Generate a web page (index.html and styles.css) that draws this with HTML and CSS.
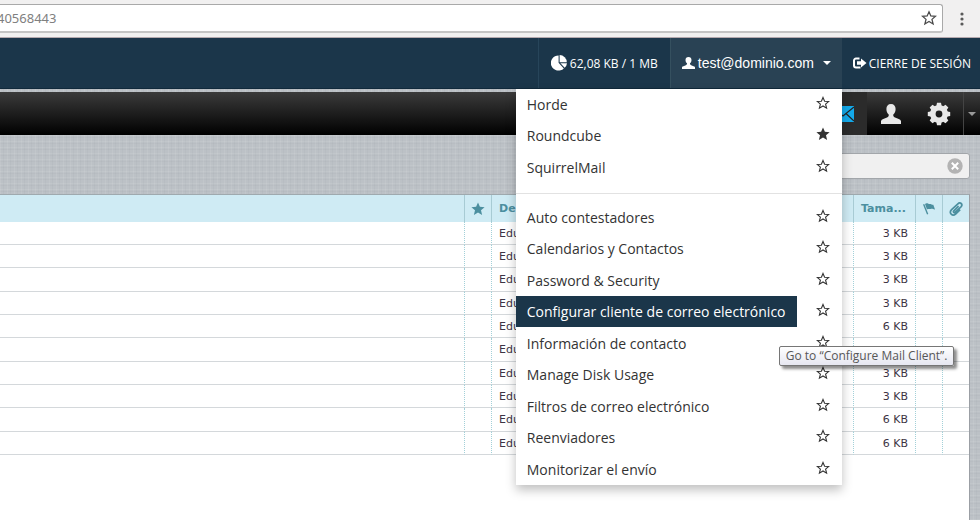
FILE: index.html
```html
<!DOCTYPE html>
<html lang="es">
<head>
<meta charset="utf-8">
<title>Webmail</title>
<link rel="stylesheet" href="styles.css">
</head>
<body>
<svg class="defs" aria-hidden="true">
  <symbol id="star-o" viewBox="0 0 14 14"><path d="M7 1.5 8.6 5.2 12.7 5.5 9.6 8.2 10.6 12.2 7 10 3.4 12.2 4.4 8.2 1.3 5.5 5.4 5.2Z" fill="none" stroke="currentColor" stroke-width="1.1"/></symbol>
  <symbol id="star" viewBox="0 0 14 14"><path d="M7 .6 8.9 4.8 13.6 5.2 10 8.3 11.1 13 7 10.5 2.9 13 4 8.3 .4 5.2 5.1 4.8Z" fill="currentColor"/></symbol>
  <symbol id="person" viewBox="0 0 20 20"><path d="M10 0C7 0 5.400 2 5.400 5c0 2.400.9 4.500 2.300 5.600.3 1.500-.3 2.300-1.700 3C3.500 14.800.6 15.200 0 17v3h20v-3c-.6-1.800-3.500-2.200-6-3.400-1.400-.7-2-1.500-1.700-3 1.400-1.100 2.300-3.200 2.300-5.600 0-3-1.600-5-4.600-5Z" fill="currentColor"/></symbol>
</svg>

<div class="browser">
  <div class="omnibox">
    <input class="url" type="text" value="40568443" aria-label="Dirección">
    <button class="bookmark" aria-label="Marcador"><svg viewBox="0 0 14 14"><use href="#star-o"/></svg></button>
  </div>
  <button class="more" aria-label="Menú"><svg viewBox="0 0 4 14"><circle cx="2" cy="2" r="1.600"/><circle cx="2" cy="7" r="1.600"/><circle cx="2" cy="12" r="1.600"/></svg></button>
</div>

<nav class="topnav">
  <div class="quota">
    <svg class="pie" viewBox="0 0 16 16"><path d="M8 8.200 12.800 13.400A7.600 7.600 0 1 1 7.600.4V7.800Z"/><path d="M8.600 7.200V0A7.300 7.300 0 0 1 15.800 7.200Z"/><path d="M9.400 8.200H16a7.500 7.500 0 0 1-2.300 4.600Z"/></svg>
    <span>62,08 KB / 1 MB</span>
  </div>
  <div class="account">
    <button class="account-toggle" aria-expanded="true"><svg class="who" viewBox="0 0 20 20" preserveAspectRatio="none"><use href="#person"/></svg><span>test@dominio.com</span><i class="caret"></i></button>
    <div class="menu">
      <ul>
        <li><a href="#">Horde</a><button aria-label="Favorito"><svg><use href="#star-o"/></svg></button></li>
        <li><a href="#">Roundcube</a><button aria-label="Favorito"><svg><use href="#star"/></svg></button></li>
        <li><a href="#">SquirrelMail</a><button aria-label="Favorito"><svg><use href="#star-o"/></svg></button></li>
      </ul>
      <hr>
      <ul>
        <li><a href="#">Auto contestadores</a><button aria-label="Favorito"><svg><use href="#star-o"/></svg></button></li>
        <li><a href="#">Calendarios y Contactos</a><button aria-label="Favorito"><svg><use href="#star-o"/></svg></button></li>
        <li><a href="#">Password &amp; Security</a><button aria-label="Favorito"><svg><use href="#star-o"/></svg></button></li>
        <li><a href="#" class="active">Configurar cliente de correo electrónico</a><button aria-label="Favorito"><svg><use href="#star-o"/></svg></button><span class="tooltip" role="tooltip">Go to “Configure Mail Client”.</span></li>
        <li><a href="#">Información de contacto</a><button aria-label="Favorito"><svg><use href="#star-o"/></svg></button></li>
        <li><a href="#">Manage Disk Usage</a><button aria-label="Favorito"><svg><use href="#star-o"/></svg></button></li>
        <li><a href="#">Filtros de correo electrónico</a><button aria-label="Favorito"><svg><use href="#star-o"/></svg></button></li>
        <li><a href="#">Reenviadores</a><button aria-label="Favorito"><svg><use href="#star-o"/></svg></button></li>
        <li><a href="#">Monitorizar el envío</a><button aria-label="Favorito"><svg><use href="#star-o"/></svg></button></li>
      </ul>
    </div>
  </div>
  <a class="logout" href="#"><svg viewBox="0 0 14 12"><path d="M7 1.500H3.500a2 2 0 0 0-2 2v5a2 2 0 0 0 2 2H8" fill="none" stroke="currentColor" stroke-width="2"/><path d="M4.500 4.300H8.500V1.500L14 6 8.500 10.500V7.700H4.500Z" fill="currentColor"/></svg><span>CIERRE DE SESIÓN</span></a>
</nav>

<div class="taskbar">
  <button class="task selected" aria-label="Correo"><svg class="mail" viewBox="0 0 22 16"><path d="M0 0H22V16H0Z" fill="#14aaeb"/><path d="M0 1 11 10 22 1M0 15 8 7.500M22 15 14 7.500" fill="none" stroke="#222" stroke-width="1.200"/></svg></button>
  <button class="task" aria-label="Contactos"><svg viewBox="0 0 20 20"><use href="#person"/></svg></button>
  <button class="task" aria-label="Configuración"><svg class="gear" viewBox="0 0 24 24"><circle cx="12" cy="12" r="6.200" fill="none" stroke="currentColor" stroke-width="5.600"/><g fill="currentColor"><path id="tooth" d="M10 .8h4l.8 4H9.200ZM9.200 19.200h5.600l-.8 4h-4Z"/><use href="#tooth" transform="rotate(45 12 12)"/><use href="#tooth" transform="rotate(90 12 12)"/><use href="#tooth" transform="rotate(135 12 12)"/></g></svg></button>
  <button class="task-more" aria-label="Más"><i class="caret"></i></button>
</div>

<main class="content">
  <div class="tools">
    <div class="search">
      <input type="text" aria-label="Buscar">
      <button aria-label="Borrar"><svg viewBox="0 0 16 16"><circle cx="8" cy="8" r="7.700" fill="#b3b3b3"/><path d="M4.800 4.800 11.200 11.200M11.200 4.800 4.800 11.200" stroke="#fff" stroke-width="2"/></svg></button>
    </div>
  </div>
  <section class="list">
    <table>
      <colgroup><col><col class="c-icon"><col class="c-from"><col class="c-size"><col class="c-icon"><col class="c-icon"></colgroup>
      <thead><tr>
        <th></th>
        <th class="icon"><svg viewBox="0 0 14 14"><use href="#star"/></svg></th>
        <th>De</th>
        <th>Tama...</th>
        <th class="icon"><svg viewBox="0 0 14 14"><path d="M1 2.500 2.300 1.900 6.300 12 5 12.600ZM3 2C5 .2 6.500 2.300 8.300 2 9.500 1.800 9.800 3.200 11.300 2.800L13 7.400C11 7.500 10.500 6.400 8.600 7 7.300 7.400 6.500 6.600 5 7.400Z" fill="currentColor"/></svg></th>
        <th class="icon"><svg viewBox="0 0 14 14"><path d="M9.600 4.200 4.800 8.800C3.800 9.900 5.200 11.200 6.200 10.200L12 4.800C14.300 2.200 11.200-.4 8.900 1.800L2.600 7.700C-.6 11 3.500 14.800 6.600 12L11.200 7.700" fill="none" stroke="currentColor" stroke-width="1.700"/></svg></th>
      </tr></thead>
      <tbody>
        <tr><td></td><td></td><td>Edu</td><td class="size">3 KB</td><td></td><td></td></tr>
        <tr><td></td><td></td><td>Edu</td><td class="size">3 KB</td><td></td><td></td></tr>
        <tr><td></td><td></td><td>Edu</td><td class="size">3 KB</td><td></td><td></td></tr>
        <tr><td></td><td></td><td>Edu</td><td class="size">3 KB</td><td></td><td></td></tr>
        <tr><td></td><td></td><td>Edu</td><td class="size">6 KB</td><td></td><td></td></tr>
        <tr><td></td><td></td><td>Edu</td><td></td><td></td><td></td></tr>
        <tr><td></td><td></td><td>Edu</td><td class="size">3 KB</td><td></td><td></td></tr>
        <tr><td></td><td></td><td>Edu</td><td class="size">3 KB</td><td></td><td></td></tr>
        <tr><td></td><td></td><td>Edu</td><td class="size">6 KB</td><td></td><td></td></tr>
        <tr><td></td><td></td><td>Edu</td><td class="size">6 KB</td><td></td><td></td></tr>
      </tbody>
    </table>
  </section>
</main>
</body>
</html>
```

FILE: styles.css
```css
* { box-sizing: border-box; }

body {
  margin: 0;
  min-height: 100vh;
  display: flex;
  flex-direction: column;
  overflow: hidden;
  font-family: "Open Sans", "Noto Sans", sans-serif;
  background-color: #bcc1c6;
  background-image:
    repeating-linear-gradient(90deg, rgba(255,255,255,.08) 0 1px, transparent 1px 3px, rgba(80,90,100,.04) 3px 4px, transparent 4px 7px),
    repeating-linear-gradient(0deg, rgba(255,255,255,.08) 0 1px, transparent 1px 4px, rgba(80,90,100,.04) 4px 5px, transparent 5px 6px);
}

button {
  margin: 0;
  padding: 0;
  border: 0;
  background: none;
  color: inherit;
  font: inherit;
  cursor: pointer;
}

svg { display: block; }
.defs { position: absolute; width: 0; height: 0; }

.caret {
  border: 4px solid transparent;
  border-top-color: currentColor;
  border-bottom: 0;
}

/* Browser bar */
.browser {
  display: flex;
  align-items: center;
  height: 38px;
  padding-right: 16px;
  background: #f1f0f0;
  border-bottom: 1px solid #b5a9ae;
}
.omnibox {
  flex: 1;
  display: flex;
  align-items: center;
  height: 29px;
  padding-right: 5px;
  background: #fff;
  border: 1px solid #a9a9a9;
  border-left: 0;
  border-bottom: 2px solid #c4c4c4;
  border-radius: 0 3px 3px 0;
}
.url {
  flex: 1;
  min-width: 0;
  margin-left: -3px;
  padding: 0;
  border: 0;
  outline: 0;
  background: none;
  color: #808080;
  font: 13px "Noto Sans", sans-serif;
}
.bookmark svg { width: 16px; height: 16px; color: #4a4a4a; }
.more { margin-left: 17px; }
.more svg { width: 4px; height: 14px; fill: #5a5a5a; }

/* Account navigation */
.topnav {
  display: flex;
  justify-content: flex-end;
  height: 51px;
  background: #1b364a;
  color: #fff;
  font-size: 12px;
  border-bottom: 1px solid #10293b;
}
.quota {
  display: flex;
  align-items: center;
  gap: 3px;
  padding: 0 12px;
  border-left: 1px solid #27455a;
}
.pie { width: 16px; height: 16px; fill: currentColor; }
.account {
  position: relative;
  width: 172px;
  background: #294254;
  border-left: 1px solid #35505f;
}
.account-toggle {
  display: flex;
  align-items: center;
  width: 100%;
  height: 100%;
  padding: 0 11px;
  font: 14px "Liberation Sans", sans-serif;
}
.who { width: 13px; height: 12px; margin-right: 3px; }
.account-toggle .caret { margin-left: auto; }
.logout {
  display: flex;
  align-items: center;
  gap: 2px;
  padding: 0 9px 0 10px;
  color: inherit;
  text-decoration: none;
}
.logout svg { width: 15px; height: 12px; }

/* Dropdown */
.menu {
  position: absolute;
  z-index: 2;
  top: 100%;
  right: 0;
  width: 326px;
  margin-top: 1px;
  background: #fff;
  color: #333;
  font-size: 14px;
  box-shadow: 0 5px 10px rgba(0,0,0,.25);
}
.menu ul { margin: 0; padding: 0; list-style: none; }
.menu li {
  position: relative;
  display: flex;
  justify-content: space-between;
  padding-right: 12px;
}
.menu li:nth-child(even) { margin-bottom: 1px; }
.menu a {
  padding: 5px 11px;
  color: inherit;
  line-height: 21px;
  text-decoration: none;
}
.menu a.active { background: #1b364a; color: #fff; }
.menu li button { height: 27px; }
.menu li svg { width: 14px; height: 14px; }
.menu hr {
  height: 1px;
  margin: 10px 0 8px;
  border: 0;
  background: #e2e2e2;
}
.tooltip {
  position: absolute;
  z-index: 3;
  top: 50px;
  left: 263px;
  padding: 0 6px;
  border: 1px solid #767676;
  border-radius: 2px;
  background: linear-gradient(#fff, #e6e7f1);
  color: #575757;
  font-size: 12px;
  line-height: 18px;
  white-space: nowrap;
  box-shadow: 3px 3px 3px rgba(0,0,0,.45);
}

/* Taskbar */
.taskbar {
  display: flex;
  justify-content: flex-end;
  height: 43px;
  margin-top: 3px;
  background: linear-gradient(#3b3b3b, #000);
  color: #e8e8e8;
}
.task {
  display: flex;
  align-items: center;
  justify-content: center;
  width: 48px;
}
.task svg { width: 20px; height: 20px; }
.task .gear { width: 24px; height: 24px; }
.task .mail { width: 22px; height: 16px; }
.task.selected { background: #2b2b2b; }
.task-more {
  display: flex;
  align-items: center;
  justify-content: center;
  width: 17px;
  border-left: 1px solid #444;
  color: #999;
}

/* Message list */
.content {
  flex: 1;
  display: flex;
  flex-direction: column;
  padding-right: 10px;
}
.tools {
  display: flex;
  justify-content: flex-end;
  padding: 18px 0 15px;
}
.search {
  display: flex;
  align-items: center;
  width: 240px;
  height: 26px;
  padding: 0 6px;
  border: 1px solid #a2a6aa;
  border-radius: 3px;
  background: #f0f0f0;
}
.search input {
  flex: 1;
  min-width: 0;
  border: 0;
  outline: 0;
  background: none;
}
.search svg { width: 16px; height: 16px; }
.list {
  flex: 1;
  background: #fff;
  border-top: 1px solid #9fa9ae;
  border-right: 1px solid #9b9fa4;
}
table {
  width: 100%;
  table-layout: fixed;
  border-collapse: separate;
  border-spacing: 0;
  font: 11px "DejaVu Sans", sans-serif;
}
.c-icon { width: 27px; }
.c-from { width: 362px; }
.c-size { width: 62px; }
th {
  height: 27px;
  padding: 0 7px;
  background: #cfebf4;
  color: #4c8f9f;
  text-align: left;
  white-space: nowrap;
}
th + th { border-left: 1px solid #a8cbd4; }
th.icon { padding: 0 6px; }
th svg { width: 14px; height: 14px; }
td {
  height: 23px;
  padding: 0 7px;
  border-bottom: 1px solid #d4d8db;
  color: #3d3444;
}
tr:nth-child(3n) td { height: 24px; }
td + td { border-left: 1px dotted #a3d0d8; }
.size { text-align: right; }
```
